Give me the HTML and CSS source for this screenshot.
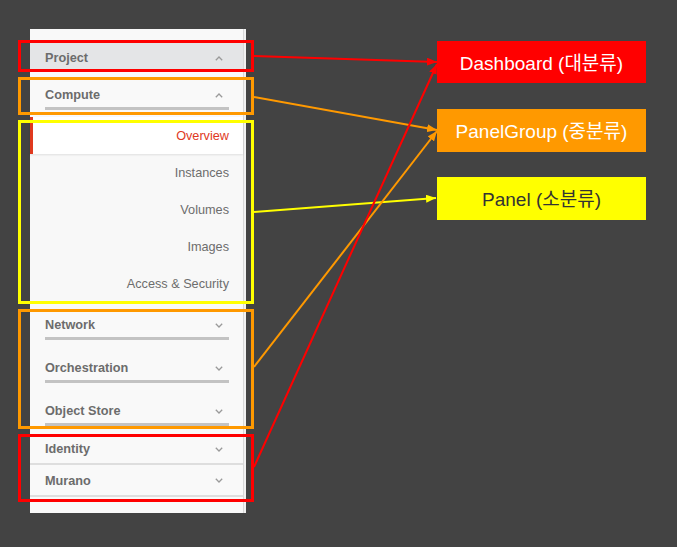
FILE: index.html
```html
<!DOCTYPE html>
<html>
<head>
<meta charset="utf-8">
<link rel="stylesheet" href="styles.css">
</head>
<body>
<div class="page">
  <nav class="sidebar">
    <div class="sidebar-inner">
      <div class="dash dash-open">
        <span>Project</span>
        <svg class="chev" width="8" height="5" viewBox="0 0 8 5"><polyline points="0.8,4.2 4,1 7.2,4.2"/></svg>
      </div>
      <div class="group group-open">
        <div class="group-head">
          <span>Compute</span>
          <svg class="chev" width="8" height="5" viewBox="0 0 8 5"><polyline points="0.8,4.2 4,1 7.2,4.2"/></svg>
        </div>
        <ul class="panels">
          <li class="panel active">Overview</li>
          <li class="panel">Instances</li>
          <li class="panel">Volumes</li>
          <li class="panel">Images</li>
          <li class="panel">Access &amp; Security</li>
        </ul>
      </div>
      <div class="group group-closed">
        <div class="group-head">
          <span>Network</span>
          <svg class="chev" width="8" height="5" viewBox="0 0 8 5"><polyline points="0.8,0.8 4,4 7.2,0.8"/></svg>
        </div>
      </div>
      <div class="group group-closed">
        <div class="group-head">
          <span>Orchestration</span>
          <svg class="chev" width="8" height="5" viewBox="0 0 8 5"><polyline points="0.8,0.8 4,4 7.2,0.8"/></svg>
        </div>
      </div>
      <div class="group group-closed">
        <div class="group-head">
          <span>Object Store</span>
          <svg class="chev" width="8" height="5" viewBox="0 0 8 5"><polyline points="0.8,0.8 4,4 7.2,0.8"/></svg>
        </div>
      </div>
      <div class="dash dash-closed first-closed">
        <span>Identity</span>
        <svg class="chev" width="8" height="5" viewBox="0 0 8 5"><polyline points="0.8,0.8 4,4 7.2,0.8"/></svg>
      </div>
      <div class="dash dash-closed">
        <span>Murano</span>
        <svg class="chev" width="8" height="5" viewBox="0 0 8 5"><polyline points="0.8,0.8 4,4 7.2,0.8"/></svg>
      </div>
    </div>
  </nav>
  <div class="legend">
    <div class="tag tag-red">Dashboard (대분류)</div>
    <div class="tag tag-orange">PanelGroup (중분류)</div>
    <div class="tag tag-yellow">Panel (소분류)</div>
  </div>
</div>
<svg class="overlay" width="677" height="547" viewBox="0 0 677 547">
  <defs>
    <marker id="ah-red" markerWidth="10" markerHeight="8" refX="10" refY="4" orient="auto" markerUnits="userSpaceOnUse"><path d="M0,0 L10,4 L0,8 Z" fill="#ff0000"/></marker>
    <marker id="ah-orange" markerWidth="10" markerHeight="8" refX="10" refY="4" orient="auto" markerUnits="userSpaceOnUse"><path d="M0,0 L10,4 L0,8 Z" fill="#ff9900"/></marker>
    <marker id="ah-yellow" markerWidth="10" markerHeight="8" refX="10" refY="4" orient="auto" markerUnits="userSpaceOnUse"><path d="M0,0 L10,4 L0,8 Z" fill="#ffff00"/></marker>
  </defs>
  <g fill="none" stroke-width="3">
    <rect x="19.5" y="41.5" width="233" height="29" stroke="#ff0000"/>
    <rect x="19.5" y="78.5" width="233" height="35" stroke="#ff9900"/>
    <rect x="19.5" y="121.5" width="233" height="181" stroke="#ffff00"/>
    <rect x="19.5" y="310.5" width="233" height="117" stroke="#ff9900"/>
    <rect x="19.5" y="435.5" width="233" height="65" stroke="#ff0000"/>
  </g>
  <g fill="none" stroke-width="2">
    <line x1="254" y1="56" x2="437" y2="62" stroke="#ff0000" marker-end="url(#ah-red)"/>
    <line x1="254" y1="97" x2="437" y2="130" stroke="#ff9900" marker-end="url(#ah-orange)"/>
    <line x1="254" y1="212" x2="436" y2="198" stroke="#ffff00" marker-end="url(#ah-yellow)"/>
    <line x1="254" y1="367" x2="437" y2="131" stroke="#ff9900" marker-end="url(#ah-orange)"/>
    <line x1="254" y1="467" x2="437" y2="64" stroke="#ff0000" marker-end="url(#ah-red)"/>
  </g>
</svg>
</body>
</html>
```

FILE: styles.css
```css
html, body {
  margin: 0;
  padding: 0;
}

body {
  background: #434343;
  width: 677px;
  height: 547px;
  overflow: hidden;
  position: relative;
  font-family: "Liberation Sans", Arial, sans-serif;
}

.page {
  display: flex;
  align-items: flex-start;
  padding: 29px 0 0 30px;
}

.sidebar {
  width: 216px;
  background: #f6f6f6;
  box-sizing: border-box;
  border-right: 2px solid #f1f1f1;
}

.sidebar-inner {
  background: #f9f9f9;
  border-right: 1px solid #d8d8d8;
  padding: 12px 0 16px 0;
}

.chev {
  display: block;
  flex: none;
}

.chev polyline {
  fill: none;
  stroke: #9a9a9a;
  stroke-width: 1.3;
}

.dash {
  display: flex;
  align-items: center;
  justify-content: space-between;
  padding: 0 20px 0 15px;
  font-size: 12.7px;
  font-weight: bold;
  color: #6c6c6c;
  line-height: 16px;
  box-sizing: border-box;
}

.dash-open {
  height: 31px;
  padding-top: 3px;
  background: #e4e5e7;
}

.dash-closed {
  height: 32px;
  padding-top: 1px;
  border-bottom: 2px solid #dedede;
}

.first-closed {
  margin-top: 7px;
  padding-top: 2px;
}

.group-head {
  display: flex;
  align-items: center;
  justify-content: space-between;
  margin: 0 14px 0 15px;
  padding: 15px 6px 4px 0;
  border-bottom: 3px solid #c3c3c3;
  font-size: 12.7px;
  font-weight: bold;
  color: #6c6c6c;
  line-height: 16px;
}

.group-closed {
  margin-bottom: 5px;
}

.panels {
  list-style: none;
  margin: 7px 0 0 0;
  padding: 0;
  background: #f8f8f8;
}

.panel {
  height: 37px;
  line-height: 35px;
  padding-top: 2px;
  text-align: right;
  padding-right: 14px;
  font-size: 12.7px;
  color: #6d6d6d;
  box-sizing: border-box;
}

.panel.active {
  background: #ffffff;
  color: #e0391e;
  border-left: 3px solid #e0391e;
  box-shadow: 0 1px 2px rgba(0, 0, 0, 0.1);
  position: relative;
}

.legend {
  margin-left: 191px;
  padding-top: 12px;
  display: flex;
  flex-direction: column;
  gap: 26px;
}

.tag {
  width: 209px;
  height: 42px;
  padding-bottom: 2px;
  box-sizing: border-box;
  display: flex;
  align-items: center;
  justify-content: center;
  font-size: 19px;
  font-family: "Liberation Sans", "Noto Sans CJK KR", Arial, sans-serif;
}

.tag-red {
  background: #ff0000;
  color: #ffffff;
}

.tag-orange {
  background: #ff9900;
  color: #ffffff;
  height: 43px;
}

.tag-yellow {
  background: #ffff00;
  color: #333333;
  height: 43px;
  margin-top: -1px;
}

.overlay {
  position: absolute;
  top: 0;
  left: 0;
  pointer-events: none;
}
```
